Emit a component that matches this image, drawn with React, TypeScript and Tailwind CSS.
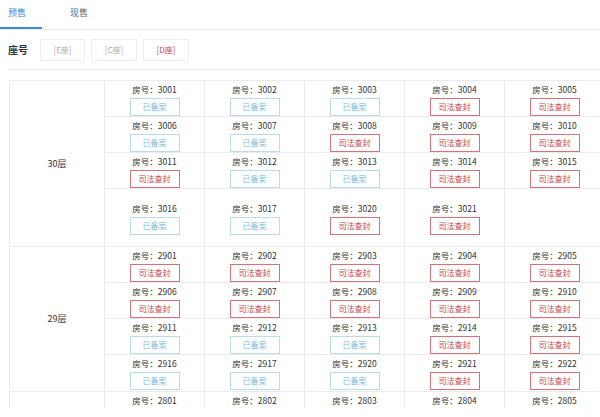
import React from 'react';

type Room = { no: string; sealed: boolean };

const R = (no: string, s: 'y' | 's'): Room => ({ no, sealed: s === 's' });

const floors: { name: string; rows: Room[][]; tall?: boolean }[] = [
  {
    name: '30层',
    tall: true,
    rows: [
      [R('3001', 'y'), R('3002', 'y'), R('3003', 'y'), R('3004', 's'), R('3005', 's')],
      [R('3006', 'y'), R('3007', 'y'), R('3008', 's'), R('3009', 's'), R('3010', 's')],
      [R('3011', 's'), R('3012', 'y'), R('3013', 'y'), R('3014', 's'), R('3015', 's')],
      [R('3016', 'y'), R('3017', 'y'), R('3020', 's'), R('3021', 's')],
    ],
  },
  {
    name: '29层',
    rows: [
      [R('2901', 's'), R('2902', 's'), R('2903', 's'), R('2904', 's'), R('2905', 's')],
      [R('2906', 's'), R('2907', 's'), R('2908', 's'), R('2909', 's'), R('2910', 's')],
      [R('2911', 'y'), R('2912', 'y'), R('2913', 'y'), R('2914', 's'), R('2915', 's')],
      [R('2916', 'y'), R('2917', 'y'), R('2920', 'y'), R('2921', 's'), R('2922', 's')],
    ],
  },
];

// 28层 only shows its first labels before the page is cut
const lastRow = ['2801', '2802', '2803', '2804', '2805'];

const RoomCell = ({ room, tall }: { room?: Room; tall?: boolean }) => (
  <div
    className={`w-[100px] shrink-0 border-r border-[#ebebeb] flex flex-col items-center ${tall ? 'justify-center' : ''}`}
  >
    {room && (
      <>
        <div className={`text-[8.5px] leading-[14px] text-[#333] ${tall ? '' : 'mt-[1px]'}`}>房号：{room.no}</div>
        {room.sealed ? (
          <div className="mt-[2px] w-[50px] h-[18px] border border-[#d4737a] text-[#c8444c] text-[8px] flex items-center justify-center">
            司法查封
          </div>
        ) : (
          <div className="mt-[2px] w-[50px] h-[18px] border border-[#b9dcea] text-[#7cbcd9] text-[8px] flex items-center justify-center">
            已备案
          </div>
        )}
      </>
    )}
  </div>
);

export default function App() {
  return (
    <div
      className="w-[600px] overflow-hidden bg-white"
      style={{ fontFamily: '"Noto Sans CJK SC", "Liberation Sans", sans-serif' }}
    >
      {/* tabs */}
      <div className="flex h-[30px] border-b border-[#ececec]">
        <div className="w-[42px] pl-[8px] pt-[7px] text-[9px] leading-[12px] text-[#3a8ad6] border-b-2 border-[#3a8ad6]">
          预售
        </div>
        <div className="ml-[28px] pt-[7px] text-[9px] leading-[12px] text-[#666]">现售</div>
      </div>

      {/* seat filter */}
      <div className="ml-[8px] h-[40px] flex items-center border-b border-[#e8e8e8]">
        <div className="w-[32px] text-[10px] font-bold text-[#333]">座号</div>
        <div className="flex gap-[6px]">
          <div className="w-[45px] h-[22px] border border-[#ededed] flex items-center justify-center text-[8px] text-[#aaa]">
            [E座]
          </div>
          <div className="w-[46px] h-[22px] border border-[#ededed] flex items-center justify-center text-[8px] text-[#aaa]">
            [C座]
          </div>
          <div className="w-[46px] h-[22px] border border-[#ededed] flex items-center justify-center text-[8px] text-[#c8444c]">
            [D座]
          </div>
        </div>
      </div>

      {/* rooms table */}
      <div className="ml-[9px] mt-[10px] w-[700px] border-t border-l border-[#ebebeb]">
        {floors.map((f) => (
          <div key={f.name} className="flex border-b border-[#ebebeb]">
            <div className="w-[95px] shrink-0 border-r border-[#ebebeb] flex items-center justify-center text-[9px] text-[#333]">
              {f.name}
            </div>
            <div className="flex flex-col">
              {f.rows.map((row, i) => {
                const tall = f.tall && i === f.rows.length - 1;
                const cells = [0, 1, 2, 3, 4].map((k) => row[k]);
                return (
                  <div
                    key={i}
                    className={`flex ${tall ? 'h-[57px]' : 'h-[36px]'} ${i < f.rows.length - 1 ? 'border-b border-[#ebebeb]' : ''}`}
                  >
                    {cells.map((room, k) => (
                      <RoomCell key={k} room={room} tall={tall} />
                    ))}
                  </div>
                );
              })}
            </div>
          </div>
        ))}
        <div className="flex h-[16px]">
          <div className="w-[95px] shrink-0 border-r border-[#ebebeb]" />
          {lastRow.map((no) => (
            <div key={no} className="w-[100px] shrink-0 border-r border-[#ebebeb] flex justify-center">
              <div className="mt-[1px] text-[8.5px] leading-[14px] text-[#333]">房号：{no}</div>
            </div>
          ))}
        </div>
      </div>
    </div>
  );
}
